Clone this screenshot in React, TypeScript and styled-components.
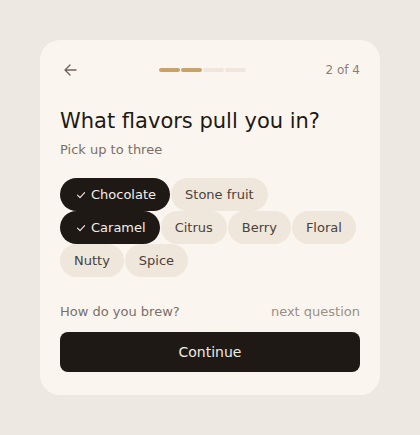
import React, { useState } from "react";
import styled, { createGlobalStyle } from "styled-components";

const Global = createGlobalStyle`
  html, body { margin: 0; padding: 0; background: #ede8e1; }
  body { font-family: "DejaVu Sans", "Liberation Sans", sans-serif; }
  * { box-sizing: border-box; }
`;

const Page = styled.div`
  padding: 40px;
  min-height: 435px;
`;

const Card = styled.div`
  width: 340px;
  height: 355px;
  background: #faf6ef;
  border-radius: 20px;
  padding: 20px 20px 23px;
  display: flex;
  flex-direction: column;
`;

const Header = styled.div`
  height: 20px;
  display: flex;
  align-items: center;
  justify-content: space-between;
`;

const BackButton = styled.button`
  border: none;
  background: none;
  padding: 0;
  width: 20px;
  height: 20px;
  display: flex;
  align-items: center;
  justify-content: center;
  color: #6e645c;
  cursor: pointer;
`;

const Progress = styled.div`
  display: flex;
  gap: 1px;
  margin-left: 79px;
`;

const Segment = styled.div<{ $done: boolean }>`
  width: 21px;
  height: 4px;
  border-radius: 2px;
  background: ${(p) => (p.$done ? "#c8a266" : "#efe7db")};
`;

const StepCount = styled.div`
  margin-left: auto;
  font-size: 12px;
  color: #8a7f75;
`;

const Title = styled.h1`
  margin: 28px 0 0;
  font-size: 21px;
  font-weight: 400;
  color: #1e1915;
  line-height: 26px;
`;

const Subtitle = styled.p`
  margin: 7px 0 0;
  font-size: 13px;
  color: #7a6f66;
  line-height: 18px;
`;

const Chips = styled.div`
  margin-top: 19px;
  display: flex;
  flex-wrap: wrap;
  gap: 0 1px;
  width: 300px;
`;

const Chip = styled.button<{ $on: boolean }>`
  height: 33px;
  padding: 0 14px 0 ${(p) => (p.$on ? "16px" : "14px")};
  border: none;
  border-radius: 17px;
  font-family: inherit;
  font-size: 13px;
  display: flex;
  align-items: center;
  gap: 5px;
  background: ${(p) => (p.$on ? "#1e1915" : "#efe7dc")};
  color: ${(p) => (p.$on ? "#f3eee6" : "#4a423c")};
  cursor: pointer;
`;

const Footer = styled.div`
  margin-top: auto;
  display: flex;
  flex-direction: column;
  gap: 11px;
`;

const NextRow = styled.div`
  display: flex;
  justify-content: space-between;
  font-size: 13px;
  line-height: 18px;
`;

const NextQuestion = styled.span`
  color: #7a6f66;
`;

const NextHint = styled.span`
  color: #9a8f85;
`;

const ContinueButton = styled.button`
  height: 40px;
  border: none;
  border-radius: 8px;
  background: #1e1915;
  color: #f0ebe3;
  font-family: inherit;
  font-size: 14px;
  cursor: pointer;
`;

const Check = () => (
  <svg width="10" height="10" viewBox="0 0 10 10" fill="none">
    <path d="M1.5 5.2 L4 7.6 L8.6 2.6" stroke="currentColor" strokeWidth="1.1" strokeLinecap="round" strokeLinejoin="round" />
  </svg>
);

const flavors = ["Chocolate", "Stone fruit", "Caramel", "Citrus", "Berry", "Floral", "Nutty", "Spice"];

export default function App() {
  const [sel, setSel] = useState<string[]>(["Chocolate", "Caramel"]);
  const toggle = (f: string) =>
    setSel((s) => (s.includes(f) ? s.filter((x) => x !== f) : s.length < 3 ? [...s, f] : s));
  return (
    <Page>
      <Global />
      <Card>
        <Header>
          <BackButton aria-label="Back">
            <svg width="16" height="16" viewBox="0 0 16 16" fill="none">
              <path d="M14 8 H3 M8 3 L3 8 L8 13" stroke="currentColor" strokeWidth="1.4" strokeLinecap="round" strokeLinejoin="round" />
            </svg>
          </BackButton>
          <Progress>
            {[0, 1, 2, 3].map((i) => (
              <Segment key={i} $done={i < 2} />
            ))}
          </Progress>
          <StepCount>2 of 4</StepCount>
        </Header>
        <Title>What flavors pull you in?</Title>
        <Subtitle>Pick up to three</Subtitle>
        <Chips>
          {flavors.map((f) => {
            const on = sel.includes(f);
            return (
              <Chip key={f} $on={on} onClick={() => toggle(f)}>
                {on && <Check />}
                {f}
              </Chip>
            );
          })}
        </Chips>
        <Footer>
          <NextRow>
            <NextQuestion>How do you brew?</NextQuestion>
            <NextHint>next question</NextHint>
          </NextRow>
          <ContinueButton>Continue</ContinueButton>
        </Footer>
      </Card>
    </Page>
  );
}
